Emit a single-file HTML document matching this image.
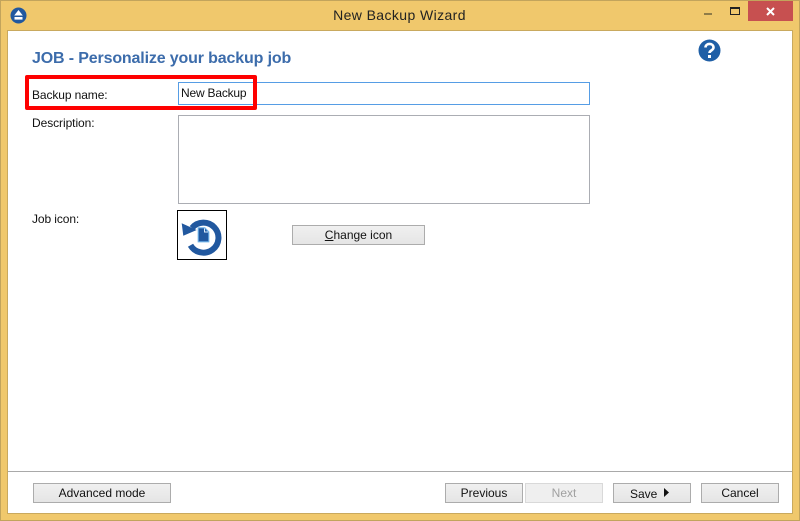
<!DOCTYPE html>
<html><head><meta charset="utf-8"><style>
html,body{margin:0;padding:0;width:800px;height:521px;overflow:hidden}
body{position:relative;background:#f0c86c;font-family:"Liberation Sans",sans-serif;font-size:12px;color:#111}
.a{position:absolute;box-sizing:border-box;white-space:nowrap}
.btn{position:absolute;box-sizing:border-box;height:20px;border:1px solid #acacac;background:linear-gradient(#f0f0f0,#e5e5e5);text-align:center;line-height:18px;font-size:12px;color:#111}
</style></head><body>
<div class="a" style="left:0;top:0;width:800px;height:521px;border:1px solid #c2a45c"></div>
<div class="a" style="left:7px;top:30px;width:786px;height:484px;background:#fff;border:1px solid #c9a95e"></div>
<svg class="a" style="left:10px;top:7px" width="17" height="17" viewBox="0 0 17 17"><circle cx="8.5" cy="8.5" r="8" fill="#21589f"/><path d="M8.5 3L12.8 8.5H4.2Z" fill="#fff"/><rect x="4.5" y="10" width="8" height="2.6" fill="#fff"/></svg>
<div class="a" style="left:0;top:7px;width:799px;text-align:center;font-size:14px;letter-spacing:.4px;color:#222">New Backup Wizard</div>
<div class="a" style="left:704px;top:13px;width:8px;height:2px;background:#8f7c48"></div>
<div class="a" style="left:730px;top:7px;width:10px;height:8px;border:1px solid #222;border-top-width:2px"></div>
<div class="a" style="left:748px;top:1px;width:45px;height:20px;background:#c75050"></div>
<svg class="a" style="left:765px;top:6px" width="11" height="11" viewBox="0 0 11 11"><path d="M2 2L9 9M9 2L2 9" stroke="#fff" stroke-width="2"/></svg>
<svg class="a" style="left:698px;top:39px" width="23" height="23" viewBox="0 0 23 23"><circle cx="11.5" cy="11.5" r="11" fill="#1f5fa6"/><path d="M7.5 8.5C7.5 3.8 15.5 3.8 15.5 8.5C15.5 11.5 11.5 11.2 11.5 14" fill="none" stroke="#fff" stroke-width="2.6"/><rect x="10" y="16" width="3" height="3" fill="#fff"/></svg>
<div class="a" style="left:32px;top:50px;font-size:16px;font-weight:bold;color:#3c6cab;letter-spacing:-.15px">JOB - Personalize your backup job</div>
<div class="a" style="left:178px;top:82px;width:412px;height:23px;border:1px solid #569de5"></div>
<div class="a" style="left:181px;top:86px;letter-spacing:-.2px">New Backup</div>
<div class="a" style="left:25px;top:75px;width:232px;height:35px;border:4px solid #fe0000;border-radius:2px"></div>
<div class="a" style="left:32px;top:88px;letter-spacing:-.1px">Backup name:</div>
<div class="a" style="left:32px;top:116px;letter-spacing:-.07px">Description:</div>
<div class="a" style="left:178px;top:115px;width:412px;height:89px;border:1px solid #abadb3"></div>
<div class="a" style="left:32px;top:212px;letter-spacing:-.1px">Job icon:</div>
<div class="a" style="left:177px;top:210px;width:50px;height:50px;border:1px solid #000"></div>
<svg class="a" style="left:178px;top:211px" width="48" height="48" viewBox="0 0 48 48"><path d="M14 17A15 15 0 1 1 12.5 34.2" fill="none" stroke="#21589f" stroke-width="6"/><path d="M3.7 12.3L18.7 19L5.3 24.7Z" fill="#21589f"/><path d="M20.2 16.8H26.8L30.8 20.8V30.8H20.2Z" fill="#21589f" stroke="#6fb1e8" stroke-width="1.1"/><path d="M26.5 17.5V21H30.2" fill="none" stroke="#dcecfa" stroke-width="1"/></svg>
<div class="btn" style="left:292px;top:225px;width:133px"><u>C</u>hange icon</div>
<div class="a" style="left:8px;top:471px;width:784px;height:1px;background:#a9a9a9"></div>
<div class="btn" style="left:33px;top:483px;width:138px">Advanced mode</div>
<div class="btn" style="left:445px;top:483px;width:78px">Previous</div>
<div class="btn" style="left:525px;top:483px;width:78px;border-color:#d9d9d9;background:#efefef;color:#a0a0a0">Next</div>
<div class="btn" style="left:613px;top:483px;width:78px;text-align:left;padding-left:16px;line-height:20px">Save</div>
<svg class="a" style="left:663px;top:487px" width="7" height="11" viewBox="0 0 7 11"><path d="M1 1L6 5.5L1 10Z" fill="#111"/></svg>
<div class="btn" style="left:701px;top:483px;width:78px">Cancel</div>
</body></html>
